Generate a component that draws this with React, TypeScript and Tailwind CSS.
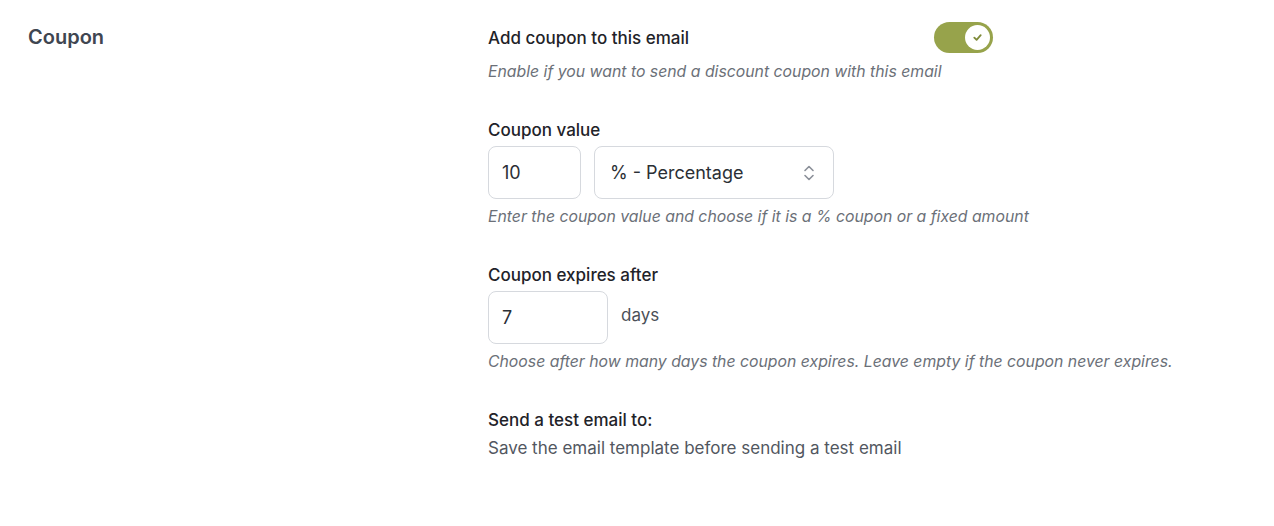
function Toggle() {
  return (
    <div className="flex h-[31px] w-[59px] items-center justify-end rounded-full bg-[#97a34b] px-[3px]">
      <div className="grid h-[25px] w-[25px] place-items-center rounded-full bg-white">
        <svg viewBox="0 0 12 12" className="h-[11px] w-[11px]" fill="none" stroke="#7f8b3a" strokeWidth="2" strokeLinecap="round" strokeLinejoin="round">
          <path d="M2.5 6.2 5 8.5 9.5 3.5" />
        </svg>
      </div>
    </div>
  );
}

function Updown() {
  return (
    <svg viewBox="0 0 12 18" className="h-[18px] w-[12px]" fill="none" stroke="#8a8f98" strokeWidth="1.6" strokeLinecap="round" strokeLinejoin="round">
      <path d="M2 6.5 6 2.5 10 6.5" />
      <path d="M2 11.5 6 15.5 10 11.5" />
    </svg>
  );
}

export default function App() {
  return (
    <div className="min-h-[526px] bg-white font-['Inter',sans-serif]">
      <div className="flex pt-[22px]">
        <div className="w-[488px] shrink-0 pl-[28px]">
          <h2 className="text-[20px] font-semibold leading-[31px] text-[#3f4651]">Coupon</h2>
        </div>

        <div className="flex flex-col">
          <div className="flex h-[31px] w-[505px] items-center justify-between">
            <span className="text-[17px] font-medium leading-[24px] text-[#1f2329]">Add coupon to this email</span>
            <Toggle />
          </div>
          <p className="mt-[7px] text-[15.8px] italic leading-[24px] text-[#6b7078]">
            Enable if you want to send a discount coupon with this email
          </p>

          <label className="mt-[34px] text-[17px] font-medium leading-[24px] text-[#1f2329]">Coupon value</label>
          <div className="mt-[4px] flex gap-[13px]">
            <div className="flex h-[53px] w-[93px] items-center rounded-[8px] border border-[#d6d9de] px-[13px] text-[18px] text-[#2b2f35]">
              10
            </div>
            <div className="flex h-[53px] w-[240px] items-center justify-between rounded-[8px] border border-[#d6d9de] pl-[15px] pr-[18px] text-[18px] text-[#2b2f35]">
              <span>% - Percentage</span>
              <Updown />
            </div>
          </div>
          <p className="mt-[6px] text-[15.8px] italic leading-[24px] text-[#6b7078]">
            Enter the coupon value and choose if it is a % coupon or a fixed amount
          </p>

          <label className="mt-[34px] text-[17px] font-medium leading-[24px] text-[#1f2329]">Coupon expires after</label>
          <div className="mt-[4px] flex items-center gap-[13px]">
            <div className="flex h-[53px] w-[120px] items-center rounded-[8px] border border-[#d6d9de] px-[13px] text-[18px] text-[#2b2f35]">
              7
            </div>
            <span className="-mt-[4px] text-[17px] text-[#4b5058]">days</span>
          </div>
          <p className="mt-[6px] text-[15.8px] italic leading-[24px] text-[#6b7078]">
            Choose after how many days the coupon expires. Leave empty if the coupon never expires.
          </p>

          <label className="mt-[34px] text-[17px] font-medium leading-[24px] text-[#1f2329]">Send a test email to:</label>
          <p className="mt-[4px] text-[17px] leading-[24px] text-[#52575f]">
            Save the email template before sending a test email
          </p>
        </div>
      </div>
    </div>
  );
}
